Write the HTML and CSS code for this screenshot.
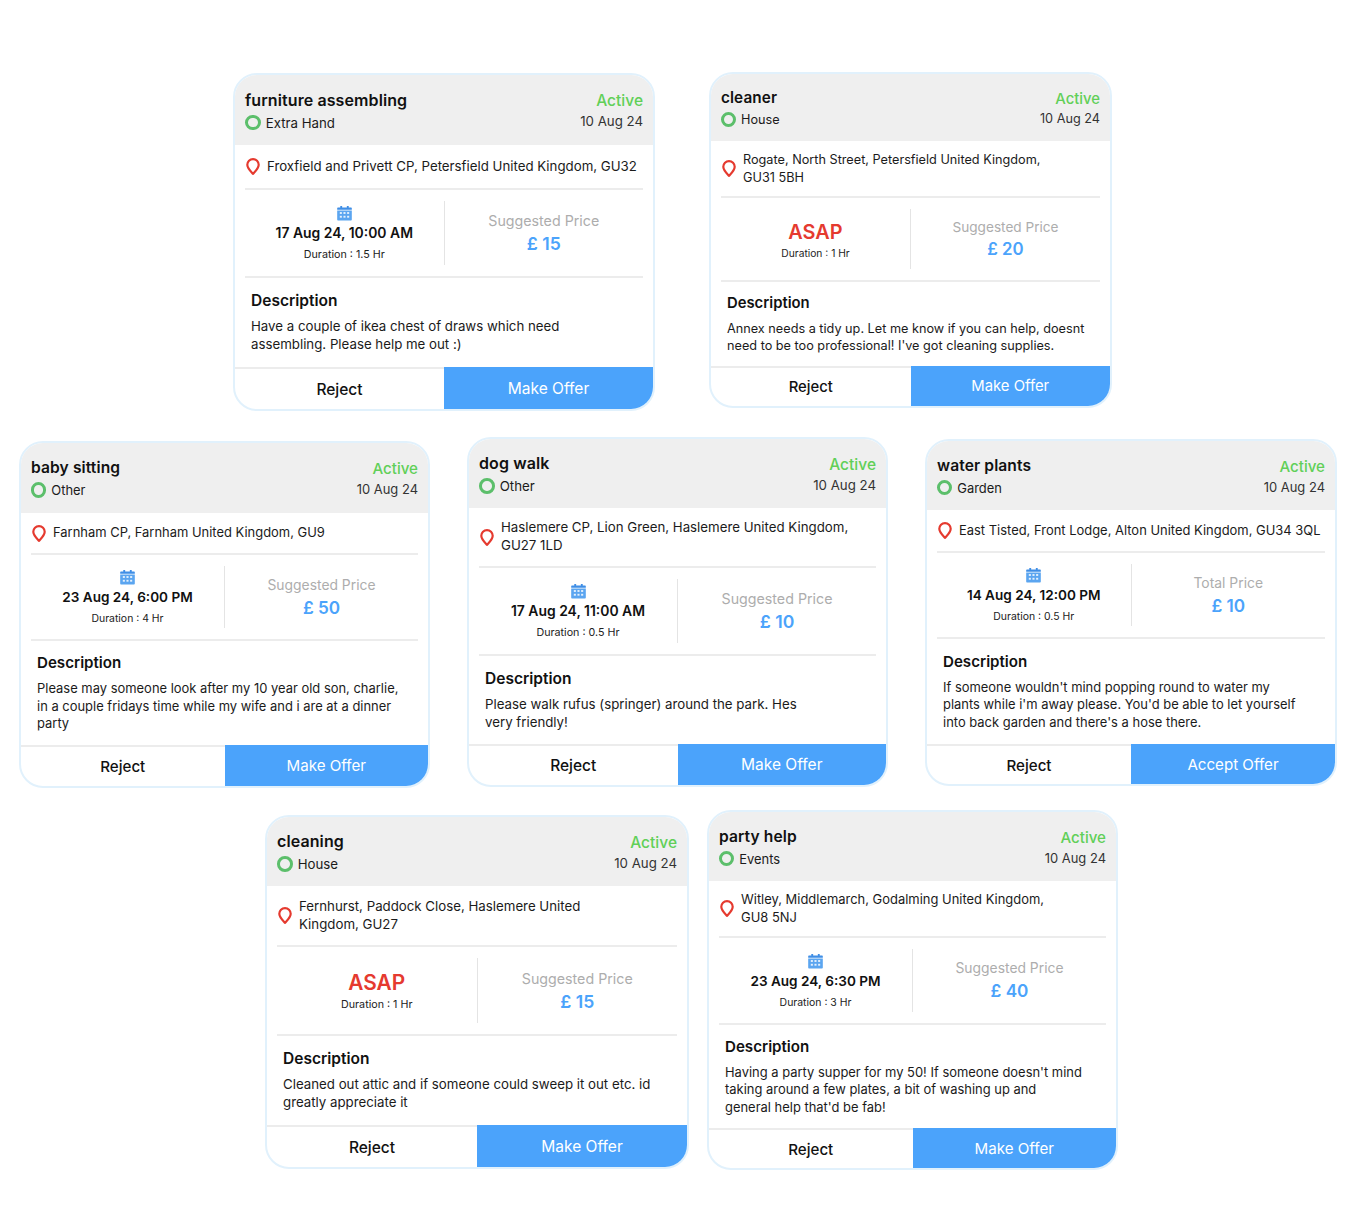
FILE: index.html
```html
<!DOCTYPE html>
<html>
<head>
  <title>Job offers</title>
  <meta name="viewport" content="width=device-width,initial-scale=1">
  <link rel="stylesheet" href="styles.css">
</head>
<body>
  <svg class="defs" width="0" height="0">
    <symbol id="pin" viewBox="0 0 14 17">
      <path d="M7 1.1a5.7 5.7 0 0 0-5.7 5.7c0 3.6 3.6 6.7 5.7 9 2.1-2.3 5.7-5.4 5.7-9A5.7 5.7 0 0 0 7 1.1z" fill="none" stroke="#e53a2f" stroke-width="2.2"/>
      <circle cx="7" cy="6.8" r="2.1" fill="#fff"/>
    </symbol>
    <symbol id="cal" viewBox="0 0 16 16">
      <path d="M3.5 0.5h2v1.5h5V0.5h2V2H15a.8.8 0 0 1 .8.8V4.6H.2V2.8A.8.8 0 0 1 1 2h2.5z" fill="#3f8ee6"/>
      <path d="M.2 5.4h15.6V15a.9.9 0 0 1-.9.9H1.1a.9.9 0 0 1-.9-.9z" fill="#5ba5f0"/>
      <g fill="#e4f1fd">
        <rect x="3" y="7" width="2.2" height="2"/><rect x="6.9" y="7" width="2.2" height="2"/><rect x="10.8" y="7" width="2.2" height="2"/>
        <rect x="3" y="11" width="2.2" height="2"/><rect x="6.9" y="11" width="2.2" height="2"/><rect x="10.8" y="11" width="2.2" height="2"/>
      </g>
    </symbol>
  </svg>

  <div class="board">
    <div class="row row-1">
      <div class="card card-1">
        <div class="head">
          <div class="head-left">
            <div class="title">furniture assembling</div>
            <div class="type"><span class="ring"></span>Extra Hand</div>
          </div>
          <div class="head-right">
            <div class="status">Active</div>
            <div class="posted">10 Aug 24</div>
          </div>
        </div>
        <div class="place"><svg class="pin"><use href="#pin"/></svg><span>Froxfield and Privett CP, Petersfield United Kingdom, GU32</span></div>
        <div class="when">
          <div class="slot">
            <svg class="cal"><use href="#cal"/></svg>
            <div class="date">17 Aug 24, 10:00 AM</div>
            <div class="duration">Duration : 1.5 Hr</div>
          </div>
          <div class="price">
            <div class="price-label">Suggested Price</div>
            <div class="price-value">£ 15</div>
          </div>
        </div>
        <div class="desc">
          <div class="desc-title">Description</div>
          <p>Have a couple of ikea chest of draws which need<br>assembling. Please help me out :)</p>
        </div>
        <div class="foot"><div class="reject">Reject</div><div class="offer">Make Offer</div></div>
      </div>

      <div class="card card-2">
        <div class="head">
          <div class="head-left">
            <div class="title">cleaner</div>
            <div class="type"><span class="ring"></span>House</div>
          </div>
          <div class="head-right">
            <div class="status">Active</div>
            <div class="posted">10 Aug 24</div>
          </div>
        </div>
        <div class="place"><svg class="pin"><use href="#pin"/></svg><span>Rogate, North Street, Petersfield United Kingdom,<br>GU31 5BH</span></div>
        <div class="when">
          <div class="slot">
            <div class="asap">ASAP</div>
            <div class="duration">Duration : 1 Hr</div>
          </div>
          <div class="price">
            <div class="price-label">Suggested Price</div>
            <div class="price-value">£ 20</div>
          </div>
        </div>
        <div class="desc">
          <div class="desc-title">Description</div>
          <p>Annex needs a tidy up. Let me know if you can help, doesnt<br>need to be too professional! I've got cleaning supplies.</p>
        </div>
        <div class="foot"><div class="reject">Reject</div><div class="offer">Make Offer</div></div>
      </div>
    </div>

    <div class="row row-2">
      <div class="card card-3">
        <div class="head">
          <div class="head-left">
            <div class="title">baby sitting</div>
            <div class="type"><span class="ring"></span>Other</div>
          </div>
          <div class="head-right">
            <div class="status">Active</div>
            <div class="posted">10 Aug 24</div>
          </div>
        </div>
        <div class="place"><svg class="pin"><use href="#pin"/></svg><span>Farnham CP, Farnham United Kingdom, GU9</span></div>
        <div class="when">
          <div class="slot">
            <svg class="cal"><use href="#cal"/></svg>
            <div class="date">23 Aug 24, 6:00 PM</div>
            <div class="duration">Duration : 4 Hr</div>
          </div>
          <div class="price">
            <div class="price-label">Suggested Price</div>
            <div class="price-value">£ 50</div>
          </div>
        </div>
        <div class="desc">
          <div class="desc-title">Description</div>
          <p>Please may someone look after my 10 year old son, charlie,<br>in a couple fridays time while my wife and i are at a dinner<br>party</p>
        </div>
        <div class="foot"><div class="reject">Reject</div><div class="offer">Make Offer</div></div>
      </div>

      <div class="card card-4">
        <div class="head">
          <div class="head-left">
            <div class="title">dog walk</div>
            <div class="type"><span class="ring"></span>Other</div>
          </div>
          <div class="head-right">
            <div class="status">Active</div>
            <div class="posted">10 Aug 24</div>
          </div>
        </div>
        <div class="place"><svg class="pin"><use href="#pin"/></svg><span>Haslemere CP, Lion Green, Haslemere United Kingdom,<br>GU27 1LD</span></div>
        <div class="when">
          <div class="slot">
            <svg class="cal"><use href="#cal"/></svg>
            <div class="date">17 Aug 24, 11:00 AM</div>
            <div class="duration">Duration : 0.5 Hr</div>
          </div>
          <div class="price">
            <div class="price-label">Suggested Price</div>
            <div class="price-value">£ 10</div>
          </div>
        </div>
        <div class="desc">
          <div class="desc-title">Description</div>
          <p>Please walk rufus (springer) around the park. Hes<br>very friendly!</p>
        </div>
        <div class="foot"><div class="reject">Reject</div><div class="offer">Make Offer</div></div>
      </div>

      <div class="card card-5">
        <div class="head">
          <div class="head-left">
            <div class="title">water plants</div>
            <div class="type"><span class="ring"></span>Garden</div>
          </div>
          <div class="head-right">
            <div class="status">Active</div>
            <div class="posted">10 Aug 24</div>
          </div>
        </div>
        <div class="place"><svg class="pin"><use href="#pin"/></svg><span>East Tisted, Front Lodge, Alton United Kingdom, GU34 3QL</span></div>
        <div class="when">
          <div class="slot">
            <svg class="cal"><use href="#cal"/></svg>
            <div class="date">14 Aug 24, 12:00 PM</div>
            <div class="duration">Duration : 0.5 Hr</div>
          </div>
          <div class="price">
            <div class="price-label">Total Price</div>
            <div class="price-value">£ 10</div>
          </div>
        </div>
        <div class="desc">
          <div class="desc-title">Description</div>
          <p>If someone wouldn't mind popping round to water my<br>plants while i'm away please. You'd be able to let yourself<br>into back garden and there's a hose there.</p>
        </div>
        <div class="foot"><div class="reject">Reject</div><div class="offer">Accept Offer</div></div>
      </div>
    </div>

    <div class="row row-3">
      <div class="card card-6">
        <div class="head">
          <div class="head-left">
            <div class="title">cleaning</div>
            <div class="type"><span class="ring"></span>House</div>
          </div>
          <div class="head-right">
            <div class="status">Active</div>
            <div class="posted">10 Aug 24</div>
          </div>
        </div>
        <div class="place"><svg class="pin"><use href="#pin"/></svg><span>Fernhurst, Paddock Close, Haslemere United<br>Kingdom, GU27</span></div>
        <div class="when">
          <div class="slot">
            <div class="asap">ASAP</div>
            <div class="duration">Duration : 1 Hr</div>
          </div>
          <div class="price">
            <div class="price-label">Suggested Price</div>
            <div class="price-value">£ 15</div>
          </div>
        </div>
        <div class="desc">
          <div class="desc-title">Description</div>
          <p>Cleaned out attic and if someone could sweep it out etc. id<br>greatly appreciate it</p>
        </div>
        <div class="foot"><div class="reject">Reject</div><div class="offer">Make Offer</div></div>
      </div>

      <div class="card card-7">
        <div class="head">
          <div class="head-left">
            <div class="title">party help</div>
            <div class="type"><span class="ring"></span>Events</div>
          </div>
          <div class="head-right">
            <div class="status">Active</div>
            <div class="posted">10 Aug 24</div>
          </div>
        </div>
        <div class="place"><svg class="pin"><use href="#pin"/></svg><span>Witley, Middlemarch, Godalming United Kingdom,<br>GU8 5NJ</span></div>
        <div class="when">
          <div class="slot">
            <svg class="cal"><use href="#cal"/></svg>
            <div class="date">23 Aug 24, 6:30 PM</div>
            <div class="duration">Duration : 3 Hr</div>
          </div>
          <div class="price">
            <div class="price-label">Suggested Price</div>
            <div class="price-value">£ 40</div>
          </div>
        </div>
        <div class="desc">
          <div class="desc-title">Description</div>
          <p>Having a party supper for my 50! If someone doesn't mind<br>taking around a few plates, a bit of washing up and<br>general help that'd be fab!</p>
        </div>
        <div class="foot"><div class="reject">Reject</div><div class="offer">Make Offer</div></div>
      </div>
    </div>
  </div>
</body>
</html>
```

FILE: styles.css
```css
* {
  box-sizing: border-box;
  padding: 0;
  margin: 0;
}

body {
  background-color: #fff;
  color: #1b1b1b;
  font-family: "Inter", "Liberation Sans", sans-serif;
}

.defs {
  display: block;
  height: 0;
}

.board {
  height: 1226px;
  padding-top: 72px;
}

.row {
  display: flex;
  align-items: flex-start;
}
.row-1 {
  height: 365px;
  padding-left: 233px;
  gap: 54px;
}
.row-2 {
  height: 373px;
  padding-left: 19px;
  gap: 37px;
}
.row-3 {
  padding-left: 265px;
  gap: 18px;
}

/* one row template per card, the screens were not all the same size */
.card {
  display: grid;
  flex: none;
  border: solid 2px #e1f1fc;
  border-radius: 24px;
  overflow: hidden;
  background-color: #fff;
}
.card-1 {
  width: 422px;
  height: 338px;
  margin-top: 1px;
  grid-template-rows: 70px 45px 88px 1fr 42px;
  font-size: 16px;
}
.card-2 {
  width: 403px;
  height: 336px;
  grid-template-rows: 67px 57px 84px 1fr 40px;
  font-size: 15.3px;
}
.card-3 {
  width: 411px;
  height: 347px;
  margin-top: 4px;
  grid-template-rows: 70px 42px 86px 1fr 41px;
  font-size: 15.6px;
}
.card-4 {
  width: 421px;
  height: 350px;
  grid-template-rows: 69px 60px 88px 1fr 41px;
  font-size: 16px;
}
.card-5 {
  width: 412px;
  height: 347px;
  margin-top: 2px;
  grid-template-rows: 69px 43px 86px 1fr 40px;
  font-size: 15.6px;
}
.card-6 {
  width: 424px;
  height: 354px;
  margin-top: 5px;
  grid-template-rows: 69px 61px 89px 1fr 42px;
  font-size: 16px;
}
.card-7 {
  width: 411px;
  height: 360px;
  grid-template-rows: 69px 57px 87px 1fr 40px;
  font-size: 15.6px;
}

.head {
  display: flex;
  justify-content: space-between;
  padding: 0 10px;
  background-color: #efefef;
}
.head-left {
  display: flex;
  flex-direction: column;
  justify-content: center;
  gap: 5px;
}
.head-right {
  display: flex;
  flex-direction: column;
  justify-content: center;
  align-items: flex-end;
  gap: 3px;
}

.title {
  font-size: 1em;
  font-weight: 600;
  letter-spacing: 0.1px;
  color: #111;
}
.type {
  display: flex;
  align-items: center;
  gap: 5px;
  font-size: 0.83em;
}
.ring {
  width: 1.18em;
  height: 1.18em;
  border: solid 3px #5cbf6b;
  border-radius: 50%;
}
.status {
  font-size: 0.97em;
  font-weight: 500;
  color: #61cf58;
}
.posted {
  font-size: 0.83em;
  color: #333;
}

.place {
  display: flex;
  align-items: center;
  gap: 7px;
  margin: 0 10px;
  padding-left: 1px;
  border-bottom: solid 2px #ececec;
  font-size: 0.83em;
  line-height: 1.35;
  white-space: nowrap;
}
.pin {
  flex: none;
  width: 14px;
  height: 17px;
}

.when {
  display: flex;
  margin: 0 10px;
  padding: 11px 0;
  border-bottom: solid 2px #ececec;
}
.slot {
  display: flex;
  flex: 1;
  flex-direction: column;
  align-items: center;
  justify-content: center;
  border-right: solid 1.5px #e4e4e4;
}
.cal {
  width: 15px;
  height: 16px;
  margin-bottom: 4px;
}
.date {
  font-size: 0.87em;
  font-weight: 600;
  margin-bottom: 7px;
  color: #111;
}
.duration {
  font-size: 0.67em;
  color: #222;
}
.asap {
  font-size: 1.3em;
  font-weight: 600;
  color: #e53a2f;
  margin-bottom: 3px;
}
.price {
  display: flex;
  flex: 1;
  flex-direction: column;
  align-items: center;
  justify-content: center;
  gap: 4px;
}
.price-label {
  font-size: 0.89em;
  color: #adadad;
}
.price-value {
  font-size: 1.1em;
  font-weight: 600;
  color: #4ba3fb;
}

.desc {
  padding: 0 16px;
  display: flex;
  flex-direction: column;
  justify-content: center;
}
.desc-title {
  font-size: 0.97em;
  font-weight: 600;
  margin-bottom: 8px;
  color: #111;
}
.desc p {
  font-size: 0.83em;
  line-height: 1.35;
  white-space: nowrap;
}

.foot {
  display: grid;
  grid-template-columns: 1fr 1fr;
  border-top: solid 2px #ececec;
  font-size: 0.97em;
}
.reject, .offer {
  display: flex;
  align-items: center;
  justify-content: center;
}
.reject {
  font-weight: 500;
  color: #111;
}
.offer {
  background-color: #4ba3fb;
  color: #fff;
  margin-top: -2px;
}
```
